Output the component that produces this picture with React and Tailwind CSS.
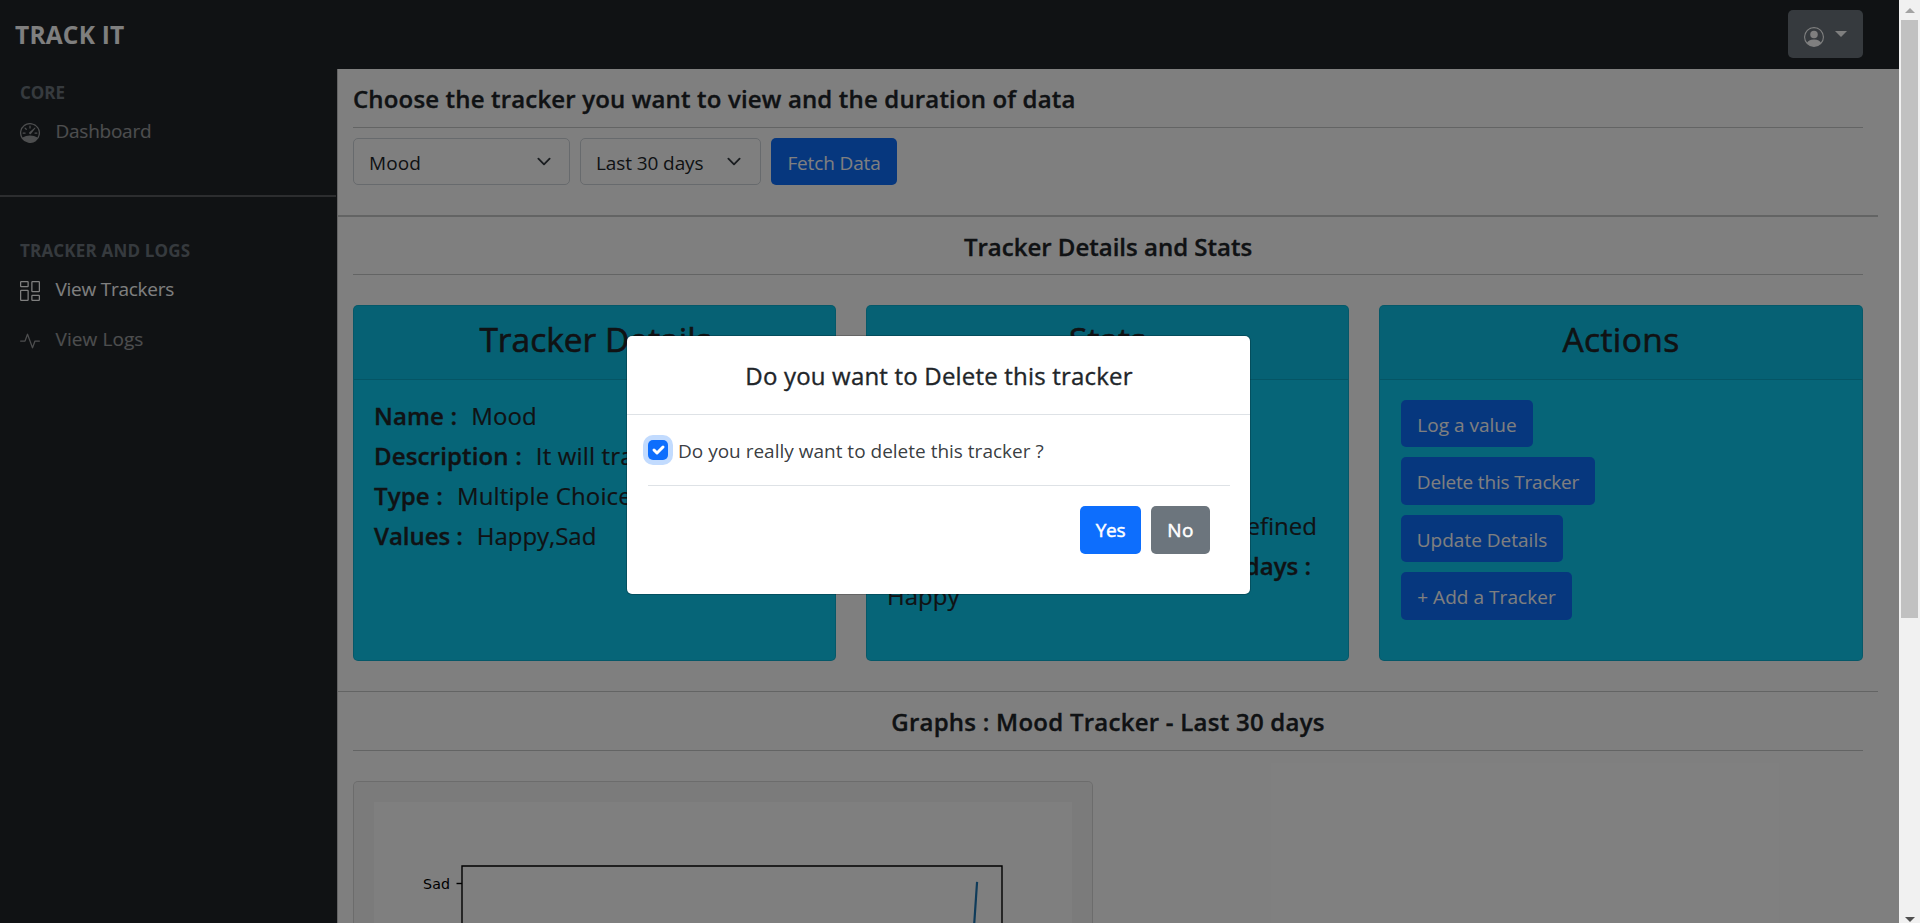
import React from "react";
import { BsSpeedometer, BsColumnsGap, BsActivity, BsPersonCircle } from "react-icons/bs";

function Header() {
  return (
    <header className="flex h-[69px] shrink-0 items-start justify-between bg-[#212529] pr-[36px] pl-[15px]">
      <a className="mt-[20px] text-[24.5px] leading-[30px] font-bold tracking-[0.2px] text-white">TRACK IT</a>
      <button className="mt-[10px] flex h-[48px] w-[75px] items-start rounded-[5px] bg-[#6c757d] pl-[16px] text-white">
        <BsPersonCircle className="mt-[17px] size-[20px]" />
        <span className="mt-[21px] ml-[11px] border-x-[6px] border-t-[6px] border-x-transparent border-t-white" />
      </button>
    </header>
  );
}

function NavItem({ icon: Icon, label, active, className }) {
  return (
    <a className={`flex h-[30px] items-start pl-[20px] text-[19px] leading-[30px] ${active ? "text-white" : "text-white/55"} ${className}`}>
      <Icon className="mt-[7px] size-[20px]" />
      <span className="ml-[15.5px]">{label}</span>
    </a>
  );
}

function Sidebar() {
  return (
    <nav className="flex w-[338px] shrink-0 flex-col border-r border-[#c8c9ca] bg-[#212529]">
      <div className="mt-[11px] pl-[20px] text-[17px] leading-[26px] font-bold text-[#6c757d]">CORE</div>
      <NavItem icon={BsSpeedometer} label="Dashboard" className="mt-[10px] tracking-[-0.25px]" />
      <div className="mt-[49px] mr-px h-[2px] shrink-0 bg-white/25" />
      <div className="mt-[41px] pl-[20px] text-[17px] leading-[26px] font-bold tracking-[0.18px] text-[#6c757d]">TRACKER AND LOGS</div>
      <NavItem icon={BsColumnsGap} label="View Trackers" active className="mt-[10px] tracking-[-0.25px]" />
      <NavItem icon={BsActivity} label="View Logs" className="mt-[20px] tracking-[0.09px]" />
    </nav>
  );
}

function Select({ children, className }) {
  return (
    <div className={`flex h-[47px] items-start justify-between rounded-[5px] border border-[#ced4da] bg-white pl-[15px] text-[19px] text-[#212529] ${className}`}>
      <span className="mt-[9px] leading-[30px]">{children}</span>
      <svg className="mt-[15px] h-[15px] w-[20px]" viewBox="0 0 16 16" fill="none" stroke="#343a40" strokeWidth="2" strokeLinecap="round" strokeLinejoin="round">
        <path d="M2 5l6 6 6-6" />
      </svg>
    </div>
  );
}

function Button({ children, className }) {
  return (
    <button className={`flex items-start justify-center rounded-[5px] text-[19px] leading-[30px] whitespace-nowrap text-white ${className}`}>
      {children}
    </button>
  );
}

function Title({ children, className }) {
  return (
    <div className="shrink-0 px-[15px]">
      <h5 className={`pt-[15px] text-[24px] leading-[30px] font-semibold [-webkit-text-stroke:0.35px] ${className}`}>{children}</h5>
      <div className="h-px bg-[#212529]/25" />
    </div>
  );
}

function Card({ title, titleClass, children }) {
  return (
    <section className="flex h-[356px] flex-col overflow-hidden rounded-[5px] border border-black/12 bg-[#0dcaf0]">
      <h3 className={`h-[74px] shrink-0 border-b border-black/12 bg-black/3 pt-[12px] text-center text-[33.5px] leading-[42px] [-webkit-text-stroke:0.6px] ${titleClass}`}>{title}</h3>
      <div className="px-[20px] pt-[21px]">{children}</div>
    </section>
  );
}

function Detail({ label, value, className }) {
  return (
    <p className={`mb-[10px] flex text-[24px] leading-[30px] whitespace-nowrap ${className}`}>
      <span className="font-semibold [-webkit-text-stroke:0.35px]">{label} :</span>
      <span className="ml-[14px] [-webkit-text-stroke:0.2px]">{value}</span>
    </p>
  );
}

function Graph() {
  return (
    <div className="mx-[15px] mt-[30px] w-[740px] shrink-0 rounded-[5px] border border-black/12 bg-black/3 px-[20px] pt-[20px]">
      <div className="h-[500px] bg-white">
        <svg className="block h-[500px] w-full" viewBox="0 0 698 500" fill="none">
          <path d="M88 500V64H628V500" stroke="#000" strokeWidth="1.4" />
          <path d="M82.500 81.500H88" stroke="#000" strokeWidth="1.4" />
          <path d="M603 81L600 125L595 230" stroke="#1f77b4" strokeWidth="2.2" strokeLinecap="square" />
          <text x="49" y="87" fill="#000" fontSize="14.2" textLength="27" className="font-['DejaVu_Sans',sans-serif]">Sad</text>
        </svg>
      </div>
    </div>
  );
}

function Main() {
  return (
    <main className="flex w-[1540px] shrink-0 flex-col bg-white">
      <Title className="pb-[13px] tracking-[0.16px]">Choose the tracker you want to view and the duration of data</Title>
      <div className="mt-[10px] flex shrink-0 gap-[10px] px-[15px]">
        <Select className="w-[217px] pr-[15px] tracking-[0.1px]">Mood</Select>
        <Select className="w-[181px] pr-[16px] tracking-[-0.1px]">Last 30 days</Select>
        <Button className="h-[47px] w-[126px] bg-[#0d6efd] pt-[10px] tracking-[-0.14px]">Fetch Data</Button>
      </div>
      <div className="mt-[30px] h-[2px] shrink-0 bg-[#212529]/25" />
      <Title className="pb-[12px] text-center">Tracker Details and Stats</Title>
      <div className="mt-[30px] grid shrink-0 grid-cols-[483px_483px_484px] gap-[30px] px-[15px]">
        <Card title="Tracker Details" titleClass="pl-[2px]">
          <Detail label="Name" value="Mood" className="tracking-[0.15px]" />
          <Detail label="Description" value="It will track mood" className="tracking-[0.15px]" />
          <Detail label="Type" value="Multiple Choice" className="tracking-[0.15px]" />
          <Detail label="Values" value="Happy,Sad" className="tracking-[-0.04px]" />
        </Card>
        <Card title="Stats">
          <div className="flex w-[430px] flex-col items-end pt-[110px]">
            <p className="mb-[10px] text-[24px] leading-[30px] [-webkit-text-stroke:0.2px]">undefined</p>
            <p className="pr-[6px] text-[24px] leading-[30px] font-semibold [-webkit-text-stroke:0.35px]">Top value in last 30 days :</p>
          </div>
          <p className="text-[24px] leading-[30px] [-webkit-text-stroke:0.2px]">Happy</p>
        </Card>
        <Card title="Actions" titleClass="tracking-[0.4px]">
          <div className="-mt-px flex flex-col items-start gap-[10px] pl-px">
            <Button className="h-[47px] w-[132px] bg-[#0d6efd] pt-[10px]">Log a value</Button>
            <Button className="h-[48px] w-[194px] bg-[#0d6efd] pt-[10px] tracking-[-0.18px]">Delete this Tracker</Button>
            <Button className="h-[47px] w-[162px] bg-[#0d6efd] pt-[10px]">Update Details</Button>
            <Button className="h-[48px] w-[171px] bg-[#0d6efd] pt-[10px] tracking-[0.05px]">+ Add a Tracker</Button>
          </div>
        </Card>
      </div>
      <div className="mt-[30px] h-px shrink-0 bg-[#212529]/25" />
      <Title className="pb-[13px] text-center tracking-[0.25px]">Graphs : Mood Tracker - Last 30 days</Title>
      <Graph />
    </main>
  );
}

function DeleteDialog() {
  return (
    <div className="absolute inset-y-0 left-0 flex w-[1899px] items-start bg-black/50 pt-[336px] pl-[627px]">
      <div className="h-[258px] w-[623px] rounded-[5px] bg-white shadow-[0_0_0_1px_rgba(0,0,0,0.2)]">
        <h5 className="h-[79px] border-b border-[#dee2e6] pt-[25px] pl-px text-center text-[24px] leading-[30px] tracking-[0.19px] [-webkit-text-stroke:0.35px]">
          Do you want to Delete this tracker
        </h5>
        <div className="pr-[20px] pl-[21px]">
          <label className="flex h-[71px] items-start border-b border-[#dee2e6] pt-[25px]">
            <span className="size-[20px] rounded-[5px] bg-[#0d6efd] ring-[5px] ring-[#c2dbfe]">
              <svg className="size-[20px]" viewBox="0 0 20 20" fill="none" stroke="#fff" strokeWidth="3" strokeLinecap="round" strokeLinejoin="round">
                <path d="M6 10l3 3l6-6" />
              </svg>
            </span>
            <span className="-mt-[4px] ml-[10px] text-[19px] leading-[30px] text-[#212529]/90">Do you really want to delete this tracker ?</span>
          </label>
          <div className="flex justify-end gap-[10px] pt-[20px] pr-[20px]">
            <Button className="h-[48px] w-[61px] bg-[#0d6efd] pt-[9px] tracking-[-0.3px] [-webkit-text-stroke:0.5px]">Yes</Button>
            <Button className="h-[48px] w-[59px] bg-[#6c757d] pt-[9px] tracking-[0.3px] [-webkit-text-stroke:0.5px]">No</Button>
          </div>
        </div>
      </div>
    </div>
  );
}

function Scrollbar() {
  return (
    <div className="flex h-[923px] w-[21px] shrink-0 flex-col items-center bg-[#f1f1f1]">
      <span className="mt-[8px] border-x-[5px] border-b-[5px] border-x-transparent border-b-[#a3a3a3]" />
      <span className="mt-[7px] mr-px h-[598px] w-[17px] bg-[#c1c1c1]" />
      <span className="mt-auto mb-px border-x-[5px] border-t-[5px] border-x-transparent border-t-[#505050]" />
    </div>
  );
}

export default function App() {
  return (
    <div className="relative flex h-[923px] w-[1920px] overflow-hidden bg-white font-['Open_Sans','Noto_Sans',sans-serif] text-[#212529]">
      <div className="flex h-[923px] w-[1899px] flex-col overflow-hidden">
        <Header />
        <div className="flex min-h-0 flex-1">
          <Sidebar />
          <Main />
        </div>
      </div>
      <Scrollbar />
      <DeleteDialog />
    </div>
  );
}
